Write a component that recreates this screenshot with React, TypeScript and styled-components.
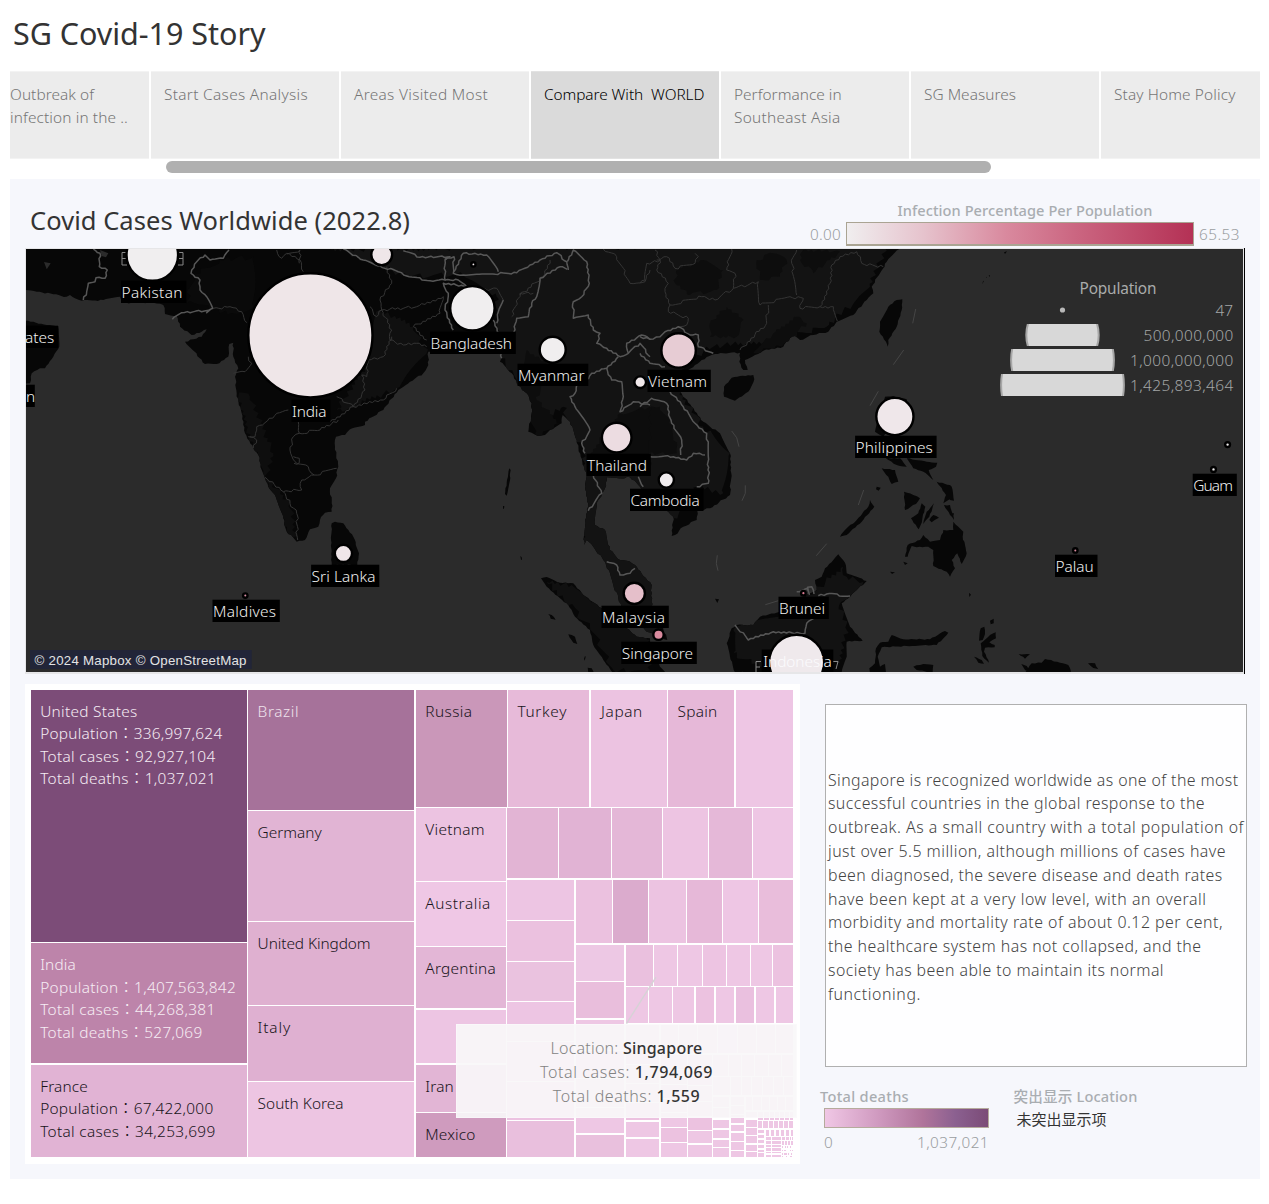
import React, { useLayoutEffect, useRef, useState } from 'react';
import styled, { createGlobalStyle } from 'styled-components';

const SANS = '"Noto Sans", "Noto Sans CJK JP", sans-serif';

const GlobalStyle = createGlobalStyle`
  * { box-sizing: border-box; }
  body { margin: 0; background: #fff; font-family: ${SANS}; font-weight: 300; }
`;

/* ---------- text that is tracked to a given width ---------- */

const FitSpan = styled.span`
  display: inline-block;
  white-space: pre;
`;

function Fit({ w, children }: { w: number; children: React.ReactNode }) {
  const ref = useRef<HTMLSpanElement>(null);
  const [gap, setGap] = useState(0);
  useLayoutEffect(() => {
    const el = ref.current;
    if (!el) return;
    const count = (el.textContent || '').length;
    setGap((w - el.getBoundingClientRect().width) / count);
  }, [w]);
  return (
    <FitSpan ref={ref} style={{ letterSpacing: gap }}>
      {children}
    </FitSpan>
  );
}

/* ---------- page ---------- */

const Page = styled.main`
  width: 1269px;
  height: 1204px;
  padding: 0 9px 0 10px;
  overflow: hidden;
  background: #fff;
`;

const StoryTitle = styled.h1`
  margin: 0;
  padding: 11px 0 0 3px;
  height: 71px;
  font-size: 30.5px;
  line-height: 44px;
  font-weight: 400;
  color: #333;
`;

const Tabs = styled.nav`
  display: flex;
  gap: 2px;
  height: 88px;
`;

const Tab = styled.div<{ $w: number; $active?: boolean; $cut?: boolean }>`
  flex: 0 0 ${(p) => p.$w}px;
  padding: 11px 0 0 ${(p) => (p.$cut ? 0 : 13)}px;
  background: ${(p) => (p.$active ? '#dadada' : '#ececec')};
  border-top: 1px solid ${(p) => (p.$active ? '#e2e2e2' : '#f3f3f3')};
  border-bottom: 1px solid ${(p) => (p.$active ? '#e2e2e2' : '#f3f3f3')};
  color: ${(p) => (p.$active ? '#000' : '#757575')};
  font-size: 15.4px;
  line-height: 23px;
  overflow: hidden;
`;

const ScrollTrack = styled.div`
  height: 20px;
  padding: 2px 0 0 156px;
`;

const ScrollThumb = styled.div`
  width: 825px;
  height: 12px;
  border-radius: 6px;
  background: #b0b0b0;
`;

const Dashboard = styled.section`
  height: 1000px;
  padding: 0 15px;
  background: #f6f7fc;
`;

const DashHeader = styled.header`
  display: flex;
  justify-content: space-between;
  height: 69px;
  padding: 0 5px;
`;

const DashTitle = styled.h2`
  margin: 23px 0 0;
  font-size: 25.5px;
  line-height: 36px;
  font-weight: 400;
  color: #333;
`;

const PercentLegend = styled.div`
  display: flex;
  flex-direction: column;
  align-items: center;
  padding-top: 20px;
  width: 430px;
`;

const LegendTitle = styled.div`
  font-size: 14.6px;
  line-height: 22px;
  height: 23px;
  font-weight: 500;
  color: #a9adb1;
`;

const LegendRow = styled.div`
  display: flex;
  align-items: center;
  gap: 5px;
  width: 100%;
  height: 24px;
  font-size: 15.3px;
  color: #9a9da0;
`;

const PercentBar = styled.div`
  width: 348px;
  height: 24px;
  border: 1px solid #aaa493;
  border-bottom-width: 2px;
  background: linear-gradient(90deg, #f0eeef, #e6c3cd 22%, #d9899e 46%, #cb6681 66%, #b43155);
`;

const MapFrame = styled.div`
  width: 1220px;
  height: 426px;
  padding: 1px 1px 2px;
  border-right: 1px solid #000;
  background: #e6e6e8;

  svg { display: block; }
`;

const Lower = styled.div`
  display: flex;
  gap: 20px;
  padding-top: 10px;
`;

const TreeFrame = styled.div`
  position: relative;
  width: 775px;
  height: 480px;
  padding: 6px;
  background: #fff;

  svg { display: block; }
`;

const Tooltip = styled.div`
  position: absolute;
  left: 431px;
  top: 340px;
  width: 341px;
  height: 94px;
  padding-top: 11px;
  background: rgba(248, 247, 248, 0.92);
  border: 1px solid rgba(255, 255, 255, 0.35);
  text-align: center;
  font-size: 16px;
  line-height: 24px;
  color: #838383;

  b { font-weight: 500; color: #333; }
`;

const Side = styled.aside`
  width: 427px;
  padding: 20px 0 0;
`;

const Story = styled.div`
  display: flex;
  flex-direction: column;
  justify-content: center;
  width: 422px;
  height: 363px;
  margin-left: 5px;
  padding: 4px 0 0 2px;
  border: 1px solid #b0b0b0;
  background: #fefeff;
  font-size: 15.9px;
  line-height: 23.8px;
  color: #444;
`;

const Legends = styled.div`
  display: grid;
  grid-template-columns: 170px 1fr;
  column-gap: 23.5px;
  padding-top: 18px;
`;

const DeathBar = styled.div`
  width: 165px;
  height: 20px;
  margin: 0 0 3px 4px;
  border: 1px solid #b5ab9c;
  background: linear-gradient(90deg, #f0c7e5, #cf99bf 33%, #b0749b 60%, #8b6090 80%, #7b4b77);
`;

const DeathScale = styled.div`
  display: flex;
  justify-content: space-between;
  width: 165px;
  margin-left: 4px;
  font-size: 15.3px;
  line-height: 23px;
  color: #9a9da0;
`;

const HighlightValue = styled.div`
  padding-left: 3px;
  font-size: 15px;
  line-height: 22px;
  font-weight: 400;
  color: #333;
`;

/* ---------- map geometry: survey sheets at three units per pixel ---------- */

type Pt = [number, number];
const A = 20;
const B = 330;
const C = 640;
const D = 950;

const pts = (ox: number, s: string): Pt[] =>
  s
    .trim()
    .split(/\s+/)
    .map((p) => p.split(',').map(Number))
    .map(([x, y]) => [ox + x / 3, 240 + y / 3] as Pt);

/* breaks straight runs into small uneven steps */
const rough = (line: Pt[], amp: number, close = false): Pt[] => {
  const out: Pt[] = [];
  const src = close ? [...line, line[0]] : line;
  src.forEach((p, i) => {
    out.push(p);
    const q = src[i + 1];
    if (!q) return;
    const len = Math.hypot(q[0] - p[0], q[1] - p[1]);
    const n = Math.floor(len / 2.6);
    for (let k = 1; k < n; k++) {
      const t = k / n;
      const h = Math.sin(p[0] * 12.9 + p[1] * 78.2 + k * 37.7) * 43758.5;
      const d = (h - Math.floor(h) - 0.5) * 2 * amp;
      out.push([p[0] + (q[0] - p[0]) * t - ((q[1] - p[1]) / len) * d, p[1] + (q[1] - p[1]) * t + ((q[0] - p[0]) / len) * d]);
    }
  });
  return out;
};

const path = (p: Pt[], close = false) =>
  'M' + p.map(([x, y]) => `${x.toFixed(1)} ${y.toFixed(1)}`).join('L') + (close ? 'Z' : '');

const mainland: Pt[] = [
  ...pts(A, '0,20 0,148 50,155 100,163 140,170 150,165 185,182 250,180 300,170 310,188 400,188 430,195 435,222 470,228 480,260 515,285 545,275 560,268 545,290 495,305 555,372 590,372 625,350 628,312 640,308 640,350 655,385 645,410 650,460 665,520 675,580 700,625 715,645 725,690 735,715 745,740 765,765 790,835 800,875 830,905 855,900 870,868 895,860 900,840 915,818 935,815 935,790 930,745 948,715 955,680 945,620'),
  ...pts(B, '18,590 45,585 60,568 105,555 105,545 160,510 205,450 240,425 280,400 295,375 295,335 400,330 500,330 515,345 510,365 545,400 560,430 590,460 605,490 605,520 595,575 625,588 645,585 660,570 695,550 698,525 720,545 740,600 752,650 770,705 765,740 775,800 765,840 762,915 770,900 790,920 820,960 840,1000 850,1035 865,1075 880,1110 930,1150'),
  ...pts(C, '20,1175 55,1190 82,1200 60,1140 35,1100 35,1035 10,1008'),
  ...pts(B, '915,975 890,962 870,960 840,930 825,870 795,855 800,790 825,745 830,712 865,715 900,712 930,740 950,790'),
  ...pts(C, '85,815 100,830 95,888 105,885 130,860 170,840 172,812 210,805 270,765 274,700 270,640 240,580 190,545 155,500 120,455 100,430 130,400 165,375 185,360 225,342 250,340 300,338 298,365 310,390 323,390 315,360 345,345 370,332 430,320 450,295 465,288 480,300 520,285 565,275 590,245 640,225 680,180 700,160 695,140 720,100 740,65 778,27 778,15'),
];

const islands: Pt[][] = [
  pts(A, '0,238 80,255 115,258 118,320 100,350 75,385 60,385 35,400 30,430 0,430'),
  pts(B, '5,850 15,845 40,850 70,890 87,940 82,975 5,975 3,900'),
  pts(B, '538,685 542,690 538,730 530,767 525,762 531,720'),
  pts(B, '519,798 523,798 522,806 519,806'),
  pts(B, '571,948 575,952 576,959 573,959'),
  [
    ...pts(B, '633,1015 650,1011 690,1028 730,1030 760,1065 815,1105 890,1165 920,1190 960,1195'),
    ...pts(C, '30,1225 60,1280 78,1300'),
    ...pts(B, '850,1300 820,1260 790,1215 780,1170 735,1130 715,1095 690,1075 650,1040'),
  ],
  pts(B, '655,1122 665,1125 677,1139 662,1136'),
  pts(B, '715,1183 735,1190 742,1212 730,1208'),
  pts(B, '765,1248 767,1250 764,1262 762,1256'),
  pts(B, '773,1283 785,1285 792,1298 775,1298'),
  pts(C, '770,180 787,178 785,210 770,260 745,300 743,320 738,305 718,275 720,245 745,200'),
  pts(C, '252,440 275,413 300,408 340,405 343,418 325,455 285,482 252,470'),
  pts(C, '225,1076 237,1078 232,1089'),
  pts(C, '735,470 760,468 800,478 805,500 730,590 705,575'),
  pts(C, '737,655 780,655 800,680 770,675'),
  pts(C, '725,685 765,690 775,725 755,732 745,710'),
  pts(C, '800,655 860,665 892,668 888,680 866,690 880,720 850,695 820,685'),
  pts(C, '890,725 930,735 935,775 910,790 918,765'),
  pts(C, '792,755 820,765 840,775 828,792 795,810'),
  pts(C, '813,835 835,820 845,790 856,800 842,855 836,868'),
  pts(C, '860,815 882,790 868,830 850,852'),
  pts(C, '868,840 880,825 897,833 875,847'),
  pts(C, '912,795 930,795 942,840 930,825'),
  pts(C, '710,740 722,743 716,752 708,748'),
  [
    ...pts(C, '795,950 803,915 840,900 850,885 870,905 900,900 910,870 940,870 940,850'),
    ...pts(D, '10,845 25,860 40,875 38,890 50,940 35,972 22,940 5,960 15,985 0,1010'),
    ...pts(C, '920,995 880,978 880,930 865,920 830,922 815,918 803,950'),
  ],
  pts(C, '790,965 803,970 795,975'),
  pts(C, '750,995 765,997 756,1002'),
  pts(D, '0,735 5,740 12,782 0,780'),
  pts(C, '600,890 620,865 650,840 685,800 690,780 703,800 665,845 620,885'),
  pts(C, '525,1020 545,1010 555,985 580,960 595,943 615,968 620,1000 680,1023 650,1050 630,1070 605,1090 630,1160 668,1202 620,1205 620,1250 605,1297 285,1297 270,1250 260,1210 275,1165 290,1155 340,1155 360,1130 420,1115 480,1075 530,1050'),
  pts(C, '688,1285 705,1270 708,1225 720,1208 745,1205 755,1185 790,1198 870,1198 915,1173 925,1178 890,1215 800,1218 725,1222 713,1250 720,1280 735,1272 738,1298 690,1298'),
  pts(C, '820,1280 850,1272 880,1275 878,1298 830,1290'),
  pts(D, '120,1142 131,1136 131,1150 122,1153'),
  pts(D, '92,1165 103,1160 105,1182 98,1200 87,1202'),
  pts(D, '92,1210 120,1185 137,1177 138,1195 118,1207 134,1215 134,1222 105,1223 102,1235 117,1268 97,1248'),
  pts(D, '72,1250 95,1260 102,1271 85,1268'),
  pts(D, '225,1298 245,1270 275,1268 285,1257 330,1268 355,1275 363,1298'),
  pts(D, '206,1242 240,1243 225,1256'),
  pts(D, '214,1272 230,1278 240,1297 225,1290'),
  pts(D, '414,1270 435,1270 445,1287 430,1284'),
  pts(D, '57,1058 63,1064 58,1071'),
  pts(D, '7,820 12,820 10,828'),
  pts(D, '162,37 171,34 165,42'),
  pts(D, '97,133 102,122 99,124'),
  pts(D, '116,107 120,105 119,111'),
  pts(D, '108,112 110,110 110,114'),
];

const uplands: Pt[][] = [
  [...pts(B, '0,27 40,27 100,60 230,108 400,105 500,170 505,330 560,430 590,460 640,540 700,500 760,640 760,915 870,1100 920,1190'), ...pts(C, '60,1190 35,1035 0,980 170,740 250,760 270,640 190,560 100,430 200,320 420,300 560,260 690,140 740,15')],
  pts(B, '20,510 70,500 200,445 290,340 250,260 150,210 110,300 110,380'),
  pts(A, '650,450 690,470 760,640 735,720 800,870 830,900 810,790 730,700 680,570'),
  pts(A, '500,190 520,110 600,60 700,50 700,200 640,220'),
  pts(C, '540,1040 610,980 620,1010 670,1025 600,1090 620,1170 600,1270 380,1290 280,1240 280,1170 420,1120'),
  pts(B, '650,1025 725,1035 960,1200 960,1290 850,1290 780,1160'),
];

const uplandFill = ['#131313', '#101010', '#0e0e0e', '#0a0a0a', '#121212', '#101010'];

const lowlands: Pt[][] = [
  pts(C, '110,90 190,60 250,90 230,150 150,165 105,130'),
  pts(C, '210,250 260,200 310,240 290,290 210,290'),
  pts(C, '350,60 400,40 440,60 420,110 360,120'),
  pts(C, '0,510 60,500 100,560 110,640 20,640'),
  pts(C, '490,30 600,35 570,60 520,100 480,60'),
  pts(B, '590,330 650,370 620,480 690,550 620,590 570,440'),
  pts(B, '870,520 960,500 960,700 900,700 780,640'),
  pts(C, '400,280 470,230 500,250 440,310 340,340'),
];

const countryBorders: Pt[][] = [
  pts(A, '220,27 240,40 238,80 262,90 255,115 228,113 225,125 205,130 200,155 190,180'),
  pts(A, '627,30 610,55 570,60 555,45 530,65 513,100 540,120 540,150 560,170 578,205 560,218 570,210 485,218 457,238'),
  pts(B, '40,27 100,60 150,78 205,95 230,108 300,122 345,120 345,60 360,50 270,52 220,32'),
  pts(B, '345,60 372,50 370,100 400,105 560,98 600,75 630,60 680,38 710,65 715,90'),
  pts(B, '372,95 400,40 470,45 505,95'),
  pts(B, '712,65 730,30 770,65 778,130 755,170 730,185 730,235 775,225 790,270 810,280 800,310 830,325 870,350 895,340 890,310 935,285 960,298'),
  pts(B, '712,88 690,80 630,115 620,170 605,190 595,230 560,235 550,285'),
  pts(B, '345,120 385,120 410,140 340,130 355,160 345,210 370,270'),
  pts(B, '490,240 510,290 515,355'),
  pts(B, '520,180 505,215 500,250'),
  pts(B, '865,350 830,385 785,400 775,418'),
  pts(B, '740,435 735,460 720,470 735,500 780,570 755,610 765,640'),
  pts(B, '790,705 815,760 775,812'),
  pts(B, '830,385 845,420 875,425 880,470 870,515 910,485 960,495'),
  pts(B, '895,340 930,310 960,350'),
  pts(B, '830,965 860,975 870,1005 900,1000 915,985'),
  pts(B, '925,710 940,740'),
  pts(C, '0,290 30,298 60,290 75,275 115,260 150,285 175,285 175,320 220,340'),
  pts(C, '0,340 30,370 75,380'),
  pts(C, '90,455 130,500 165,550 200,580 205,650 205,730 170,740'),
  pts(C, '0,500 35,475 80,490 95,550 125,600 122,645'),
  pts(C, '30,650 100,650 140,660 160,640 195,645'),
  pts(C, '285,1155 325,1200 400,1175 495,1180 500,1150 530,1130'),
  pts(C, '535,1067 560,1062 630,1068'),
  pts(C, '470,1055 500,1045 508,1063 503,1042 515,1040 522,1062'),
];

const stateBorders: Pt[][] = [
  pts(A, '580,205 630,200 665,215 680,248'),
  pts(A, '640,400 675,395 695,370 685,350'),
  pts(A, '685,590 705,590 710,560 735,548 770,520 805,510'),
  pts(A, '690,590 710,600 700,625'),
  pts(A, '835,545 838,580 820,590 810,630 825,665 865,680 883,705 950,685'),
  pts(A, '820,650 838,655 838,668 822,670'),
  pts(A, '838,580 900,570 955,540'),
  pts(A, '735,712 790,755 845,750 845,720 883,705'),
  pts(A, '790,755 810,790 830,820 833,900'),
  pts(A, '770,30 785,55 800,40 840,60 850,95'),
  pts(A, '800,42 840,30 838,70'),
  pts(B, '170,80 185,130 150,180 155,210 260,200 340,170'),
  pts(B, '155,210 185,270 180,300 220,315 260,310 290,320'),
  pts(B, '120,200 140,230 155,210'),
  pts(B, '185,290 160,350 115,360 110,410 95,405 105,450 70,500 0,545'),
  pts(B, '20,470 70,500 160,480 200,445'),
  pts(B, '340,170 330,220 250,260 290,300'),
  pts(B, '545,230 570,160 610,160'),
  pts(B, '820,27 860,50 900,130 945,125 960,90'),
  pts(B, '440,150 500,145 520,180'),
  pts(B, '570,165 640,110 660,60'),
  pts(C, '45,30 60,60 20,70 15,120 0,130'),
  pts(C, '50,60 80,50 105,85 165,70 175,50 165,40'),
  pts(C, '50,90 85,130 75,155 90,195 185,170 225,180 280,145 285,100 260,90 275,27'),
  pts(C, '60,60 50,90'),
  pts(C, '280,145 355,125 360,195 450,170 490,175 480,205 540,200'),
  pts(C, '470,30 455,70 470,165'),
  pts(C, '540,200 570,130 575,75 600,50 650,35 665,70 730,80'),
  pts(C, '540,200 580,200 592,243'),
  pts(C, '385,195 380,250 300,330'),
  pts(C, '90,195 85,215 145,235 140,255 115,262'),
];

const dashLines: Pt[][] = [
  pts(C, '827,207 818,250'),
  pts(C, '791,330 760,374'),
  pts(C, '715,454 690,497'),
  pts(C, '275,573 290,593 297,620'),
  pts(C, '316,736 316,760 306,782'),
  pts(C, '671,750 655,795'),
  pts(C, '560,911 529,947'),
  pts(C, '232,946 229,970 234,992'),
  pts(C, '376,1094 415,1082'),
];

type Bubble = { x: number; y: number; r: number; fill: string };
const bubbles: Bubble[] = [
  { x: 152.3, y: 255, r: 24.6, fill: '#f0eeef' },
  { x: 310.4, y: 335.3, r: 60.9, fill: '#efe6e8' },
  { x: 381.7, y: 254.7, r: 9.2, fill: '#efe6e9' },
  { x: 473.4, y: 264.4, r: 0.9, fill: '#efe6e9' },
  { x: 472.4, y: 308.3, r: 21, fill: '#f0eeef' },
  { x: 552.7, y: 349.7, r: 11.8, fill: '#f0eeef' },
  { x: 640.2, y: 382.2, r: 4.6, fill: '#f0e8ea' },
  { x: 616.7, y: 437.6, r: 13.6, fill: '#ecdce1' },
  { x: 634.3, y: 593.4, r: 9.4, fill: '#e5bfca' },
  { x: 678.6, y: 350.4, r: 16, fill: '#e7ccd4' },
  { x: 666.3, y: 480, r: 6.4, fill: '#f0ecee' },
  { x: 658.5, y: 634.7, r: 4, fill: '#d98a9e' },
  { x: 894.9, y: 416.5, r: 17.4, fill: '#efe7ea' },
  { x: 803.4, y: 593.2, r: 1.1, fill: '#d9788f' },
  { x: 796.6, y: 662.3, r: 26.3, fill: '#efe9ec' },
  { x: 343.4, y: 553.4, r: 7.4, fill: '#f0e6e9' },
  { x: 245.3, y: 595.6, r: 1, fill: '#dd93a8' },
  { x: 1227.6, y: 444.6, r: 1.2, fill: '#f2f0f0' },
  { x: 1213.5, y: 469.4, r: 1.2, fill: '#f2f0f0' },
  { x: 1075.3, y: 550.4, r: 1, fill: '#d98a9e' },
];

type PlaceLabel = { t: string; x: number; e: number; y: number };
const placeLabels: PlaceLabel[] = [
  { t: 'Pakistan', x: 121.5, e: 182.5, y: 298 },
  { t: 'ates', x: 25, e: 54.2, y: 343 },
  { t: 'n', x: 26, e: 31, y: 402 },
  { t: 'India', x: 292, e: 326.5, y: 417 },
  { t: 'Maldives', x: 213, e: 276, y: 617 },
  { t: 'Sri Lanka', x: 311.6, e: 375.5, y: 582 },
  { t: 'Bangladesh', x: 430.5, e: 512, y: 349 },
  { t: 'Myanmar', x: 518, e: 584.5, y: 381 },
  { t: 'Thailand', x: 587, e: 647, y: 471 },
  { t: 'Cambodia', x: 630.5, e: 699.7, y: 506 },
  { t: 'Malaysia', x: 602, e: 665, y: 623 },
  { t: 'Singapore', x: 621.8, e: 693, y: 659 },
  { t: 'Vietnam', x: 648, e: 707, y: 387 },
  { t: 'Philippines', x: 855.6, e: 932.8, y: 453 },
  { t: 'Brunei', x: 779, e: 825, y: 614 },
  { t: 'Guam', x: 1193.2, e: 1233, y: 491 },
  { t: 'Palau', x: 1055.5, e: 1093.7, y: 572 },
];

const sizeRows = [
  { t: '500,000,000', x: 1143.5, y: 341, top: 324, r: 37.2 },
  { t: '1,000,000,000', x: 1130, y: 366, top: 349, r: 52.4 },
  { t: '1,425,893,464', x: 1130, y: 391, top: 374, r: 62.4 },
];

const MapText = styled.text<{ $fill?: string; $weight?: number }>`
  font-family: ${SANS};
  font-size: 15.4px;
  font-weight: ${(p) => p.$weight || 300};
  fill: ${(p) => p.$fill || '#f0f0f0'};
`;

function BubbleMap() {
  const land = [mainland, ...islands].map((p, i) => path(rough(p, i === 0 ? 0.8 : 0.5, true), true)).join('');
  return (
    <svg width="1217" height="423" viewBox="26 249 1217 423">
      <defs>
        <clipPath id="land">
          <path d={land} />
        </clipPath>
        {sizeRows.map((s, i) => (
          <clipPath id={`band${i}`} key={s.t}>
            <rect x="990" y={s.top} width="150" height="22" />
          </clipPath>
        ))}
      </defs>
      <rect x="20" y="240" width="1240" height="440" fill="#2b2b2b" />
      <path d={land} fill="#070707" />
      <g clipPath="url(#land)">
        {uplands.map((p, i) => (
          <path key={i} d={path(rough(p, 3, true), true)} fill={uplandFill[i]} />
        ))}
        {lowlands.map((p, i) => (
          <path key={i} d={path(rough(p, 2, true), true)} fill="#0d0d0d" />
        ))}
        <path d={path(pts(A, '240,30 265,40 258,52 245,48'), true)} fill="#2b2b2b" />
        <path d={path(pts(A, '72,66 92,70 80,88'), true)} fill="#2b2b2b" />
      </g>
      <g fill="none" stroke="#343434" strokeWidth="1" strokeLinejoin="round">
        {stateBorders.map((p, i) => (
          <path key={i} d={path(rough(p, 1.5))} />
        ))}
      </g>
      <g fill="none" stroke="#575757" strokeWidth="1.5" strokeLinejoin="round">
        {countryBorders.map((p, i) => (
          <path key={i} d={path(rough(p, 1))} />
        ))}
      </g>
      <g fill="none" stroke="#454545" strokeWidth="1">
        {dashLines.map((p, i) => (
          <path key={i} d={path(p)} />
        ))}
      </g>
      <g fill="none" stroke="#888" strokeWidth="1">
        <path d="M127 252.5H122V265H127M122 258.5H126M178 252.5H183V265H178M179 258.5H183" />
        <path d="M761 661.5H756V672M756 667H760M833 661.5H838L836 669" />
      </g>
      <rect x="761.7" y="649.5" width="71.6" height="24" fill="#000" />
      {bubbles.map((b, i) => (
        <circle key={i} cx={b.x} cy={b.y} r={b.r + 1.2} fill={b.fill} stroke="#000" strokeWidth={2.4} />
      ))}
      <MapText x="763.3" y="667.3" textLength="68.5" $fill="#fbfbfd">Indonesia</MapText>
      {placeLabels.map((l) => (
        <g key={l.t}>
          <rect x={l.x - 0.5} y={l.y - 17.3} width={l.e - l.x + 4.3} height="22.3" fill="#000" />
          <MapText x={l.x} y={l.y} textLength={l.e - l.x}>{l.t}</MapText>
        </g>
      ))}
      <MapText x="1079.5" y="294" textLength="77" $fill="#a9abab" $weight={400}>Population</MapText>
      <circle cx="1062.5" cy="310" r="2.6" fill="#b8b8b8" />
      <MapText x="1215.5" y="316" textLength="17.5" $fill="#a3a6a6">47</MapText>
      {sizeRows.map((s, i) => (
        <g key={s.t}>
          <circle cx="1062.5" cy={s.top + 11} r={s.r - 1} fill="#d8d8d8" stroke="#a6a6a6" strokeWidth="2" clipPath={`url(#band${i})`} />
          <MapText x={s.x} y={s.y} textLength={1233.3 - s.x} $fill="#a3a6a6">{s.t}</MapText>
        </g>
      ))}
      <rect x="30" y="650" width="221.7" height="19" fill="#222538" />
      <text x="34.5" y="665" textLength="212" fontFamily='"Liberation Sans", Arial, sans-serif' fontSize="13.3" fill="#e4e4e4">
        © 2024 Mapbox © OpenStreetMap
      </text>
    </svg>
  );
}

/* ---------- treemap ---------- */

type Cell = [number, number, number, number, string];

const P = '#eec7e4';
const P2 = '#ecc2e0';
const row = (y1: number, y2: number, xs: [number, number][], fills: string[]): Cell[] =>
  xs.map(([a, b], i) => [a, y1, b, y2, fills[i % fills.length]]);
const col = (x1: number, x2: number, ys: [number, number][], fills: string[]): Cell[] =>
  ys.map(([a, b], i) => [x1, a, x2, b, fills[i % fills.length]]);

const cells: Cell[] = [
  [31, 690, 247, 942, '#7c4c78'],
  [31, 943, 247, 1063, '#bd84aa'],
  [31, 1065, 247, 1157, '#e1b3d4'],
  [248, 690, 414, 810, '#a6729a'],
  [248, 811, 414, 921, '#e1b4d4'],
  [248, 922, 414, 1005, '#dfb0d0'],
  [248, 1006, 414, 1081, '#dfb0d1'],
  [248, 1082, 414, 1157, '#edc5e2'],
  [416, 690, 507, 807, '#ca97b9'],
  [508, 690, 589, 807, '#e7bad9'],
  [591, 690, 667, 807, '#ecc3e1'],
  [668, 690, 734, 807, '#e6b8d8'],
  [736, 690, 793, 807, '#eec6e4'],
  ...col(416, 506, [[808, 881], [882, 946], [947, 1008], [1010, 1063], [1065, 1112], [1113, 1157]], ['#ecc3e1', '#efc7e5', '#e3b6d6', '#edc5e3', '#e2b5d5', '#cf9bbe']),
  ...row(808, 878, [[507, 558], [559, 611], [612, 662], [663, 708], [709, 752], [753, 793]], ['#e2b4d4', '#e1b3d4', '#e4b7d7', '#edc4e2', '#e5b8d8', '#eec6e4']),
  ...col(507, 574, [[880, 920], [921, 961], [962, 1001], [1002, 1041], [1042, 1081], [1082, 1120], [1121, 1157]], ['#edc5e3', '#ebc1df', '#eac2df', '#edc5e3', '#ecc3e1', '#ecc2e1', '#e9bfdd']),
  ...row(880, 943, [[576, 612], [613, 648], [649, 686], [687, 722], [723, 758], [759, 793]], ['#ebc1df', '#dbabcd', '#ecc3e1', '#e6b8d8', '#eec6e4', '#e9bddb']),
  ...col(576, 624, [[945, 981], [982, 1018], [1020, 1050], [1051, 1078], [1079, 1107], [1108, 1133], [1135, 1157]], ['#edc8e4', '#e9bedc', P, P2, P, P, '#e9c0dd']),
  ...row(945, 986, [[626, 653], [654, 677], [678, 702], [703, 726], [727, 750], [751, 772], [773, 793]], ['#eac0de', P, P, '#edc4e2', P, P, P2]),
  ...row(987, 1023, [[626, 648], [649, 672], [673, 694], [696, 714], [716, 734], [736, 754], [756, 774], [776, 793]], [P, P, P, P2, P, '#eac0df', P, P]),
  ...col(626, 659, [[1025, 1044], [1045, 1064], [1065, 1083], [1084, 1102], [1103, 1120], [1122, 1137], [1139, 1157]], [P, P2, P]),
  ...row(1025, 1053, [[661, 678], [679, 697], [698, 717], [718, 737], [738, 756], [757, 775], [776, 793]], [P, P, P, '#f3c7e8', P]),
  ...col(661, 687, [[1055, 1069], [1070, 1084], [1085, 1098], [1099, 1112], [1113, 1127], [1128, 1142], [1143, 1157]], [P, P, P2]),
  ...col(688, 712, [[1055, 1070], [1071, 1085], [1086, 1101], [1102, 1116], [1117, 1130], [1131, 1143], [1145, 1157]], [P, P2, P]),
  ...row(1055, 1076, [[713, 728], [729, 741], [742, 754], [755, 768], [769, 781], [782, 793]], [P]),
  ...row(1077, 1095, [[713, 730], [731, 741], [742, 751], [752, 762], [763, 773], [774, 783], [784, 793]], [P]),
  ...col(713, 729, [[1097, 1107], [1108, 1118], [1120, 1128], [1130, 1138], [1140, 1147], [1148, 1157]], [P]),
  ...col(731, 744, [[1097, 1105], [1106, 1114], [1115, 1123], [1125, 1131], [1133, 1141], [1142, 1150], [1151, 1157]], [P]),
  ...row(1097, 1110, [[746, 752], [753, 761], [762, 769], [770, 777], [778, 785], [786, 793]], [P]),
  ...col(746, 757, [[1112, 1118], [1120, 1127], [1128, 1135], [1136, 1143], [1145, 1151], [1152, 1157]], [P]),
  ...row(1112, 1120, [[758, 763], [764, 769], [770, 774], [775, 778.5], [779.5, 783.5], [784.5, 788.5], [789.5, 793]], [P]),
  ...row(1121, 1128, [[758, 762], [763, 767.5], [768.5, 773], [774, 778], [779, 783], [784, 788], [789, 793]], [P]),
  ...col(758, 764, [[1130, 1133], [1135, 1138], [1140, 1143], [1145, 1148], [1150, 1152], [1153, 1157]], [P]),
  ...row(1130, 1136, [[766, 769], [771, 774], [776, 779], [781, 784], [786, 789], [791, 793]], [P]),
  ...[766, 772, 777].flatMap((x) => col(x, x + (x === 777 ? 4 : 5), [[1137, 1140], [1141, 1144], [1145, 1147], [1148, 1151], [1152, 1153], [1155, 1157]], [P])),
  ...row(1137, 1140, [[782, 785], [786, 788.5], [789.5, 791], [792, 793]], [P]),
  ...row(1141, 1145, [[782, 784], [785, 787], [788, 790], [791, 793]], [P]),
  ...row(1146, 1148, [[782, 783], [784.5, 785.5], [787, 788], [790, 791]], [P]),
  ...row(1150, 1151, [[782, 783], [784, 786], [790, 791], [792, 793]], [P]),
  ...row(1153, 1155, [[782, 783], [784, 787], [788, 789], [791, 792]], [P]),
  ...row(1156, 1157, [[782, 783], [786, 787], [790, 792]], [P]),
];

type TreeLabel = [string, number, number, number, string];
const W = '#f6edf4';
const K = '#18141a';
const treeLabels: TreeLabel[] = [
  ['United States', 40.2, 717, 97, W],
  ['Population：336,997,624', 40.2, 739, 182, W],
  ['Total cases：92,927,104', 40.2, 762, 175, W],
  ['Total deaths：1,037,021', 40.2, 784, 175.5, W],
  ['India', 40.2, 970, 35.5, W],
  ['Population：1,407,563,842', 40.2, 993, 195.5, W],
  ['Total cases：44,268,381', 40.2, 1015, 175, W],
  ['Total deaths：527,069', 40.2, 1038, 162, W],
  ['France', 40.2, 1092, 47.5, K],
  ['Population：67,422,000', 40.2, 1114, 173, K],
  ['Total cases：34,253,699', 40.2, 1137, 175, K],
  ['Brazil', 257.6, 717, 41, '#efe2ec'],
  ['Germany', 257.6, 838, 64, K],
  ['United Kingdom', 257.6, 949, 113, K],
  ['Italy', 257.6, 1033, 32.5, K],
  ['South Korea', 257.6, 1109, 86, K],
  ['Russia', 425.3, 717, 46.7, K],
  ['Turkey', 517.4, 717, 49, K],
  ['Japan', 601, 717, 41.3, K],
  ['Spain', 677.6, 717, 39.7, K],
  ['Vietnam', 425.3, 835, 59.3, K],
  ['Australia', 425.3, 909, 65, K],
  ['Argentina', 425.3, 974, 70.5, K],
  ['Iran', 425.3, 1092, 28.5, K],
  ['Mexico', 425.3, 1140, 50, K],
];

function Treemap() {
  return (
    <svg width="763" height="468" viewBox="31 690 763 468">
      <g shapeRendering="crispEdges">
        {cells.map(([x1, y1, x2, y2, fill], i) => (
          <rect key={i} x={x1} y={y1} width={x2 - x1} height={y2 - y1} fill={fill} />
        ))}
      </g>
      <path d="M626.5 1023.5L656 977" stroke="#d6d3d6" strokeWidth="1.4" />
      {treeLabels.map(([t, x, y, w, fill]) => (
        <MapText key={t} x={x} y={y} textLength={w} $fill={fill}>{t}</MapText>
      ))}
    </svg>
  );
}

/* ---------- story text ---------- */

const storyLines: [string, number][] = [
  ['Singapore is recognized worldwide as one of the most', 410.5],
  ['successful countries in the global response to the', 377],
  ['outbreak. As a small country with a total population of', 416],
  ['just over 5.5 million, although millions of cases have', 398],
  ['been diagnosed, the severe disease and death rates', 394.5],
  ['have been kept at a very low level, with an overall', 378.5],
  ['morbidity and mortality rate of about 0.12 per cent,', 395],
  ['the healthcare system has not collapsed, and the', 373.5],
  ['society has been able to maintain its normal', 336],
  ['functioning.', 93],
];

export default function App() {
  return (
    <>
      <GlobalStyle />
      <Page>
        <StoryTitle><Fit w={252.5}>SG Covid-19 Story</Fit></StoryTitle>
        <Tabs>
          <Tab $w={139} $cut>
            <Fit w={84}>Outbreak of</Fit>
            <br />
            <Fit w={118}>infection in the ..</Fit>
          </Tab>
          <Tab $w={188}><Fit w={144}>Start Cases Analysis</Fit></Tab>
          <Tab $w={188}><Fit w={134}>Areas Visited Most</Fit></Tab>
          <Tab $w={188} $active><Fit w={160.3}>{'Compare With  WORLD'}</Fit></Tab>
          <Tab $w={188}>
            <Fit w={107.6}>Performance in</Fit>
            <br />
            <Fit w={106.5}>Southeast Asia</Fit>
          </Tab>
          <Tab $w={188}><Fit w={92}>SG Measures</Fit></Tab>
          <Tab $w={159}><Fit w={121.5}>Stay Home Policy</Fit></Tab>
        </Tabs>
        <ScrollTrack><ScrollThumb /></ScrollTrack>
        <Dashboard>
          <DashHeader>
            <DashTitle><Fit w={380}>Covid Cases Worldwide (2022.8)</Fit></DashTitle>
            <PercentLegend>
              <LegendTitle><Fit w={255}>Infection Percentage Per Population</Fit></LegendTitle>
              <LegendRow>
                <Fit w={31}>0.00</Fit>
                <PercentBar />
                <Fit w={41}>65.53</Fit>
              </LegendRow>
            </PercentLegend>
          </DashHeader>
          <MapFrame><BubbleMap /></MapFrame>
          <Lower>
            <TreeFrame>
              <Treemap />
              <Tooltip>
                <div><Fit w={152}>Location: <b>Singapore</b></Fit></div>
                <div><Fit w={173}>Total cases: <b>1,794,069</b></Fit></div>
                <div><Fit w={147.5}>Total deaths: <b>1,559</b></Fit></div>
              </Tooltip>
            </TreeFrame>
            <Side>
              <Story>
                {storyLines.map(([t, w]) => (
                  <div key={t}><Fit w={w}>{t}</Fit></div>
                ))}
              </Story>
              <Legends>
                <div>
                  <LegendTitle><Fit w={89}>Total deaths</Fit></LegendTitle>
                  <DeathBar />
                  <DeathScale>
                    <Fit w={9}>0</Fit>
                    <Fit w={72}>1,037,021</Fit>
                  </DeathScale>
                </div>
                <div>
                  <LegendTitle><Fit w={124}>突出显示 Location</Fit></LegendTitle>
                  <HighlightValue>未突出显示项</HighlightValue>
                </div>
              </Legends>
            </Side>
          </Lower>
        </Dashboard>
      </Page>
    </>
  );
}
